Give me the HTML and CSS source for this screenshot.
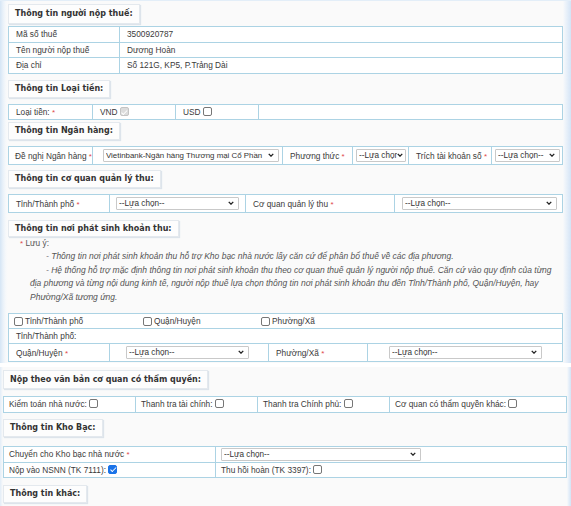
FILE: index.html
```html
<!DOCTYPE html>
<html lang="vi">
<head>
<meta charset="utf-8">
<title>Thông tin nộp thuế</title>
<link rel="stylesheet" href="styles.css">
</head>
<body>
<div class="panel panel-main">
  <div class="sec-title t1">Thông tin người nộp thuế:</div>
  <table class="grid">
    <colgroup><col class="w111"><col></colgroup>
    <tr><td>Mã số thuế</td><td>3500920787</td></tr>
    <tr><td>Tên người nộp thuế</td><td>Dương Hoàn</td></tr>
    <tr><td>Địa chỉ</td><td>Số 121G, KP5, P.Trảng Dài</td></tr>
  </table>

  <div class="sec-title t2">Thông tin Loại tiền:</div>
  <table class="grid">
    <colgroup><col class="w84"><col class="w83"><col class="w83"><col></colgroup>
    <tr>
      <td>Loại tiền: <span class="req">*</span></td>
      <td>VND <span class="chk chk-disabled"></span></td>
      <td>USD <span class="chk"></span></td>
      <td></td>
    </tr>
  </table>

  <div class="sec-title t3">Thông tin Ngân hàng:</div>
  <table class="grid tall">
    <colgroup><col class="w84"><col class="w190"><col class="w70"><col class="w56"><col class="w83"><col></colgroup>
    <tr>
      <td class="pad6">Đề nghị Ngân hàng <span class="req">*</span></td>
      <td class="pad10"><span class="sel w176"><select><option>Vietinbank-Ngân hàng Thương mại Cổ Phần</option></select><svg class="chev" viewBox="0 0 8 5"><path d="M1 1 L4 4 L7 1"/></svg></span></td>
      <td>Phương thức <span class="req">*</span></td>
      <td class="pad3"><span class="sel w49"><select><option>--Lựa chọn--</option></select><svg class="chev" viewBox="0 0 8 5"><path d="M1 1 L4 4 L7 1"/></svg></span></td>
      <td>Trích tài khoản số <span class="req">*</span></td>
      <td class="pad3"><span class="sel w65"><select><option>--Lựa chọn--</option></select><svg class="chev" viewBox="0 0 8 5"><path d="M1 1 L4 4 L7 1"/></svg></span></td>
    </tr>
  </table>

  <div class="sec-title t4">Thông tin cơ quan quản lý thu:</div>
  <table class="grid tall">
    <colgroup><col class="w101"><col class="w136"><col class="w149"><col></colgroup>
    <tr>
      <td>Tỉnh/Thành phố <span class="req">*</span></td>
      <td class="pad6"><span class="sel w123"><select><option>--Lựa chọn--</option></select><svg class="chev" viewBox="0 0 8 5"><path d="M1 1 L4 4 L7 1"/></svg></span></td>
      <td>Cơ quan quản lý thu <span class="req">*</span></td>
      <td class="pad7"><span class="sel w155"><select><option>--Lựa chọn--</option></select><svg class="chev" viewBox="0 0 8 5"><path d="M1 1 L4 4 L7 1"/></svg></span></td>
    </tr>
  </table>

  <div class="sec-title t5">Thông tin nơi phát sinh khoản thu:</div>
  <div class="note">
    <div class="note-head"><span class="req">*</span> Lưu ý:</div>
    <p>- Thông tin nơi phát sinh khoản thu hỗ trợ Kho bạc nhà nước lấy căn cứ để phân bổ thuế về các địa phương.</p>
    <p>- Hệ thống hỗ trợ mặc định thông tin nơi phát sinh khoản thu theo cơ quan thuế quản lý người nộp thuế. Căn cứ vào quy định của từng địa phương và từng nội dung kinh tế, người nộp thuế lựa chọn thông tin nơi phát sinh khoản thu đến Tỉnh/Thành phố, Quận/Huyện, hay Phường/Xã tương ứng.</p>
  </div>

  <table class="grid compact">
    <colgroup><col class="w101"><col class="w159"><col class="w99"><col></colgroup>
    <tr>
      <td colspan="4" class="pad5">
        <div class="chk-row">
          <label class="opt o1"><span class="chk"></span> Tỉnh/Thành phố</label>
          <label class="opt o2"><span class="chk"></span> Quận/Huyện</label>
          <label class="opt"><span class="chk"></span> Phường/Xã</label>
        </div>
      </td>
    </tr>
    <tr><td colspan="4">Tỉnh/Thành phố:</td></tr>
    <tr class="tallrow">
      <td>Quận/Huyện <span class="req">*</span></td>
      <td class="pad16"><span class="sel w123"><select><option>--Lựa chọn--</option></select><svg class="chev" viewBox="0 0 8 5"><path d="M1 1 L4 4 L7 1"/></svg></span></td>
      <td>Phường/Xã <span class="req">*</span></td>
      <td class="pad21"><span class="sel w153"><select><option>--Lựa chọn--</option></select><svg class="chev" viewBox="0 0 8 5"><path d="M1 1 L4 4 L7 1"/></svg></span></td>
    </tr>
  </table>
</div>

<div class="panel panel-sub">
  <div class="sec-title t6">Nộp theo văn bản cơ quan có thẩm quyền:</div>
  <table class="grid g2">
    <colgroup><col class="w132"><col class="w122"><col class="w132"><col></colgroup>
    <tr>
      <td>Kiểm toán nhà nước: <span class="chk"></span></td>
      <td>Thanh tra tài chính: <span class="chk"></span></td>
      <td>Thanh tra Chính phủ: <span class="chk"></span></td>
      <td>Cơ quan có thẩm quyền khác: <span class="chk"></span></td>
    </tr>
  </table>

  <div class="sec-title t7">Thông tin Kho Bạc:</div>
  <table class="grid g2">
    <colgroup><col class="w212"><col></colgroup>
    <tr class="row17">
      <td>Chuyển cho Kho bạc nhà nước <span class="req">*</span></td>
      <td class="pad5"><span class="sel w199"><select><option>--Lựa chọn--</option></select><svg class="chev" viewBox="0 0 8 5"><path d="M1 1 L4 4 L7 1"/></svg></span></td>
    </tr>
    <tr>
      <td>Nộp vào NSNN (TK 7111): <span class="chk chk-on"></span></td>
      <td>Thu hồi hoàn (TK 3397): <span class="chk"></span></td>
    </tr>
  </table>

  <div class="sec-title t8">Thông tin khác:</div>
</div>
</body>
</html>
```

FILE: styles.css
```css
* { box-sizing: border-box; }

html, body {
  margin: 0;
  padding: 0;
  background: #ffffff;
}

body {
  font-family: "Liberation Sans", Arial, sans-serif;
  font-size: 8.3px;
  color: #3a3a3a;
  width: 571px;
  overflow: hidden;
}

.panel {
  background:
    linear-gradient(to right, #d5e5f5 0, #e9f1f9 3px, #f7f9fb 6px, rgba(250,250,250,0) 8px) left top / 8px 100% no-repeat,
    linear-gradient(to left, #d4e4f6 0, #e6eff9 4px, #f4f7fb 7px, rgba(250,250,250,0) 8px) right top / 8px 100% no-repeat,
    #fafafa;
}

.panel-main {
  height: 363px;
  padding: 3px 8px 0 8px;
  border-top: 1px solid #e3eef8;
}

.panel-sub {
  margin-top: 4px;
  padding: 3px 4px 0 3px;
  height: 139px;
  background:
    linear-gradient(to right, #e2edf8 0, rgba(250,250,250,0) 3px) left top / 3px 100% no-repeat,
    linear-gradient(to left, #d4e4f6 0, #eef4fa 3px, rgba(250,250,250,0) 4px) right top / 4px 100% no-repeat,
    #fafafa;
}

/* section headings */
.sec-title {
  display: table;
  font-family: "DejaVu Sans", Verdana, sans-serif;
  font-weight: bold;
  font-size: 8px;
  color: #333;
  background: #fdfdfd;
  border: 1px solid #e4e9ee;
  box-shadow: 1px 1px 1px #dde4eb;
  padding: 0 6px;
  height: 18px;
  line-height: 16px;
}
.t1 { height: 20px; line-height: 18px; margin: 0 0 2px 0; }
.t2 { margin: 6px 0 6px 0; }
.t3 { margin: 2px 0 6px 0; }
.t4 { margin: 5px 0 6px 0; }
.t5 { margin: 7px 0 0 0; height: 17px; line-height: 15px; }
.t6 { margin: 0 0 7px 0; height: 19px; line-height: 17px; }
.t7 { margin: 6px 0 9px 0; }
.t8 { margin: 7px 0 0 0; }

/* grid tables */
.grid {
  width: 100%;
  table-layout: fixed;
  border-collapse: collapse;
  background: #ffffff;
}
.grid td {
  border: 1px solid #acd3e4;
  height: 15.6px;
  padding: 0 1px 0 7px;
  white-space: nowrap;
  overflow: hidden;
  vertical-align: middle;
}
.grid.compact td { height: 15px; }
.grid.tall td, .grid .tallrow td { height: 18px; }
.grid .row17 td { height: 16px; }
.g2 td { padding: 0 1px 0 5px; }

.w84 { width: 84px; }
.w83 { width: 83px; }
.w111 { width: 111px; }
.w190 { width: 190px; }
.w70 { width: 70px; }
.w56 { width: 56px; }
.w101 { width: 101px; }
.w136 { width: 136px; }
.w149 { width: 149px; }
.w159 { width: 159px; }
.w99 { width: 99px; }
.w132 { width: 132px; }
.w122 { width: 122px; }
.w212 { width: 212px; }

.grid td.pad3 { padding-left: 3px; padding-right: 2px; }
.grid td.pad5 { padding-left: 5px; }
.grid td.pad6 { padding-left: 6px; }
.grid td.pad7 { padding-left: 7px; }
.grid td.pad10 { padding-left: 10px; }
.grid td.pad16 { padding-left: 16px; }
.grid td.pad21 { padding-left: 21px; }

.req { color: #e0474c; font-size: 8px; }

/* custom select */
.sel {
  position: relative;
  display: inline-block;
  vertical-align: middle;
  height: 13px;
}
.sel select {
  -webkit-appearance: none;
  appearance: none;
  width: 100%;
  height: 13px;
  border: 1px solid #c9c9c9;
  border-radius: 1px;
  background: #fff;
  font-family: "Liberation Sans", Arial, sans-serif;
  font-size: 8.2px;
  color: #333;
  padding: 0 9px 0 2px;
  line-height: 11px;
  margin: 0;
  outline: none;
}
.sel .chev {
  position: absolute;
  right: 5px;
  top: 4px;
  width: 6px;
  height: 4px;
  fill: none;
  stroke: #222;
  stroke-width: 1.8;
}
.w176 { width: 176px; }
.w176 select { font-size: 7.9px; padding-right: 12px; }
.w49 { width: 50px; }
.w49 select { padding-right: 8px; }
.w49 .chev { right: 3px; }
.w65 { width: 65px; }
.w123 { width: 123px; }
.w155 { width: 155px; }
.w153 { width: 153px; }
.w199 { width: 200px; }

/* checkbox */
.chk {
  display: inline-block;
  width: 9px;
  height: 9px;
  border: 1px solid #767676;
  border-radius: 2px;
  background: #fff;
  vertical-align: -1px;
  position: relative;
}
.chk-disabled {
  border-color: #c4c4c4;
  background: #dcdcdc;
}
.chk-disabled::after, .chk-on::after {
  content: "";
  position: absolute;
  left: 2.5px;
  top: 0.5px;
  width: 2px;
  height: 4.5px;
  border: solid #fff;
  border-width: 0 1.3px 1.3px 0;
  transform: rotate(45deg);
}
.chk-on {
  border-color: #1a73e8;
  background: #1a73e8;
}

.chk-row { display: flex; }
.opt { display: flex; align-items: center; gap: 2px; }
.opt .chk { vertical-align: 0; }
.o1 { width: 129px; }
.o2 { width: 118px; }

/* note */
.note {
  color: #555;
  padding: 0 10px 0 22px;
  height: 76px;
}
.note-head {
  margin-left: -10px;
  line-height: 12px;
}
.note p {
  margin: 0;
  font-style: italic;
  font-size: 8.5px;
  line-height: 13.5px;
  text-indent: 16px;
}
```
